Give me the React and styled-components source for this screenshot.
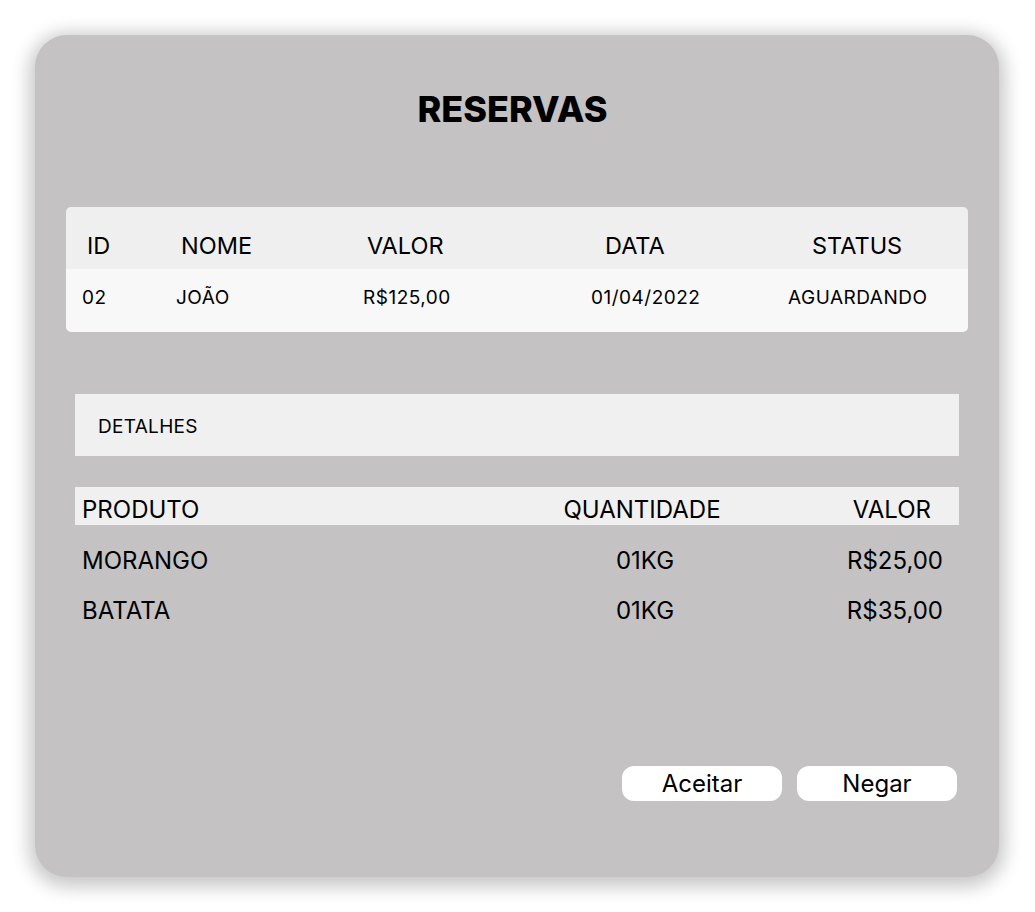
import styled, { createGlobalStyle } from "styled-components";

const GlobalStyle = createGlobalStyle`
  html, body {
    margin: 0;
    padding: 0;
    background: #ffffff;
    font-family: Inter, "Noto Sans", sans-serif;
    color: #000;
  }
`;

const reservas = [
  { id: "02", nome: "JOÃO", valor: "R$125,00", data: "01/04/2022", status: "AGUARDANDO" },
];

const produtos = [
  { nome: "MORANGO", qtd: "01KG", valor: "R$25,00" },
  { nome: "BATATA", qtd: "01KG", valor: "R$35,00" },
];

const headCols = [94, 186, 238, 207];
const rowCols = [94, 187, 228, 197];

const App = () => {
  return (
    <>
      <GlobalStyle />
      <Page>
        <Card>
          <Title>RESERVAS</Title>

          <ReservaTable>
            <HeadRow>
              <Cell $w={headCols[0]}>ID</Cell>
              <Cell $w={headCols[1]}>NOME</Cell>
              <Cell $w={headCols[2]}>VALOR</Cell>
              <Cell $w={headCols[3]}>DATA</Cell>
              <Cell>STATUS</Cell>
            </HeadRow>
            {reservas.map((r) => (
              <BodyRow key={r.id}>
                <Cell $w={rowCols[0]}>{r.id}</Cell>
                <Cell $w={rowCols[1]}>{r.nome}</Cell>
                <Cell $w={rowCols[2]}>{r.valor}</Cell>
                <Cell $w={rowCols[3]}>{r.data}</Cell>
                <Cell>{r.status}</Cell>
              </BodyRow>
            ))}
          </ReservaTable>

          <Detalhes>DETALHES</Detalhes>

          <Produtos>
            <ProdHead>
              <ProdName>PRODUTO</ProdName>
              <ProdQtd>QUANTIDADE</ProdQtd>
              <ProdValor>VALOR</ProdValor>
            </ProdHead>
            <ProdList>
              {produtos.map((p) => (
                <ProdRow key={p.nome}>
                  <ProdName>{p.nome}</ProdName>
                  <ProdQtd $row>{p.qtd}</ProdQtd>
                  <ProdValor $row>{p.valor}</ProdValor>
                </ProdRow>
              ))}
            </ProdList>
          </Produtos>

          <Actions>
            <ActionButton>Aceitar</ActionButton>
            <ActionButton>Negar</ActionButton>
          </Actions>
        </Card>
      </Page>
    </>
  );
};

export default App;

const Page = styled.div`
  width: 1035px;
  height: 912px;
  padding: 35px 36px 35px 35px;
  box-sizing: border-box;
`;
const Card = styled.div`
  height: 842px;
  background: #c4c2c3;
  border-radius: 32px;
  box-shadow: 0 4px 18px 6px rgba(0, 0, 0, 0.22);
  padding: 0 31px;
  display: flex;
  flex-direction: column;
`;
const Title = styled.h1`
  margin: 55px 0 0;
  height: 38px;
  font-size: 36px;
  font-weight: 800;
  line-height: 38px;
  text-align: center;
  padding-right: 9px;
`;
const ReservaTable = styled.div`
  margin-top: 79px;
  border-radius: 5px;
  overflow: hidden;
`;
const HeadRow = styled.div`
  display: flex;
  align-items: center;
  height: 62px;
  padding: 14px 0 0 21px;
  box-sizing: border-box;
  background: #efefef;
  font-size: 23.5px;
`;
const BodyRow = styled.div`
  display: flex;
  align-items: center;
  height: 63px;
  padding: 0 0 6px 16px;
  box-sizing: border-box;
  background: #f8f8f8;
  font-size: 19px;
  letter-spacing: 0.5px;
`;
const Cell = styled.div`
  flex: ${(p) => (p.$w ? `0 0 ${p.$w}px` : "1")};
  white-space: nowrap;
`;
const Detalhes = styled.div`
  margin: 62px 9px 0;
  height: 62px;
  box-sizing: border-box;
  background: #f0f0f0;
  display: flex;
  align-items: center;
  padding: 3px 0 0 23px;
  font-size: 19px;
  letter-spacing: 0.3px;
`;
const Produtos = styled.div`
  margin: 31px 9px 0;
  font-size: 24px;
`;
const ProdHead = styled.div`
  display: flex;
  height: 38px;
  align-items: flex-end;
  padding-left: 7px;
  background: #f0f0f0;
  line-height: 30px;
`;
const ProdList = styled.div`
  padding-top: 10px;
`;
const ProdRow = styled.div`
  display: flex;
  height: 50px;
  align-items: center;
  padding-left: 7px;
`;
const ProdName = styled.div`
  width: 476px;
`;
const ProdQtd = styled.div`
  width: 168px;
  box-sizing: border-box;
  text-align: center;
  padding-left: ${(p) => (p.$row ? "6px" : "0")};
`;
const ProdValor = styled.div`
  flex: 1;
  text-align: right;
  padding-right: ${(p) => (p.$row ? "16px" : "28px")};
`;
const Actions = styled.div`
  margin-top: auto;
  margin-bottom: 76px;
  display: flex;
  justify-content: flex-end;
  gap: 15px;
  padding-right: 11px;
`;
const ActionButton = styled.button`
  width: 160px;
  height: 35px;
  border: none;
  border-radius: 12px;
  background: #ffffff;
  font-family: Inter, sans-serif;
  font-size: 24px;
  color: #000;
  padding: 0;
`;
